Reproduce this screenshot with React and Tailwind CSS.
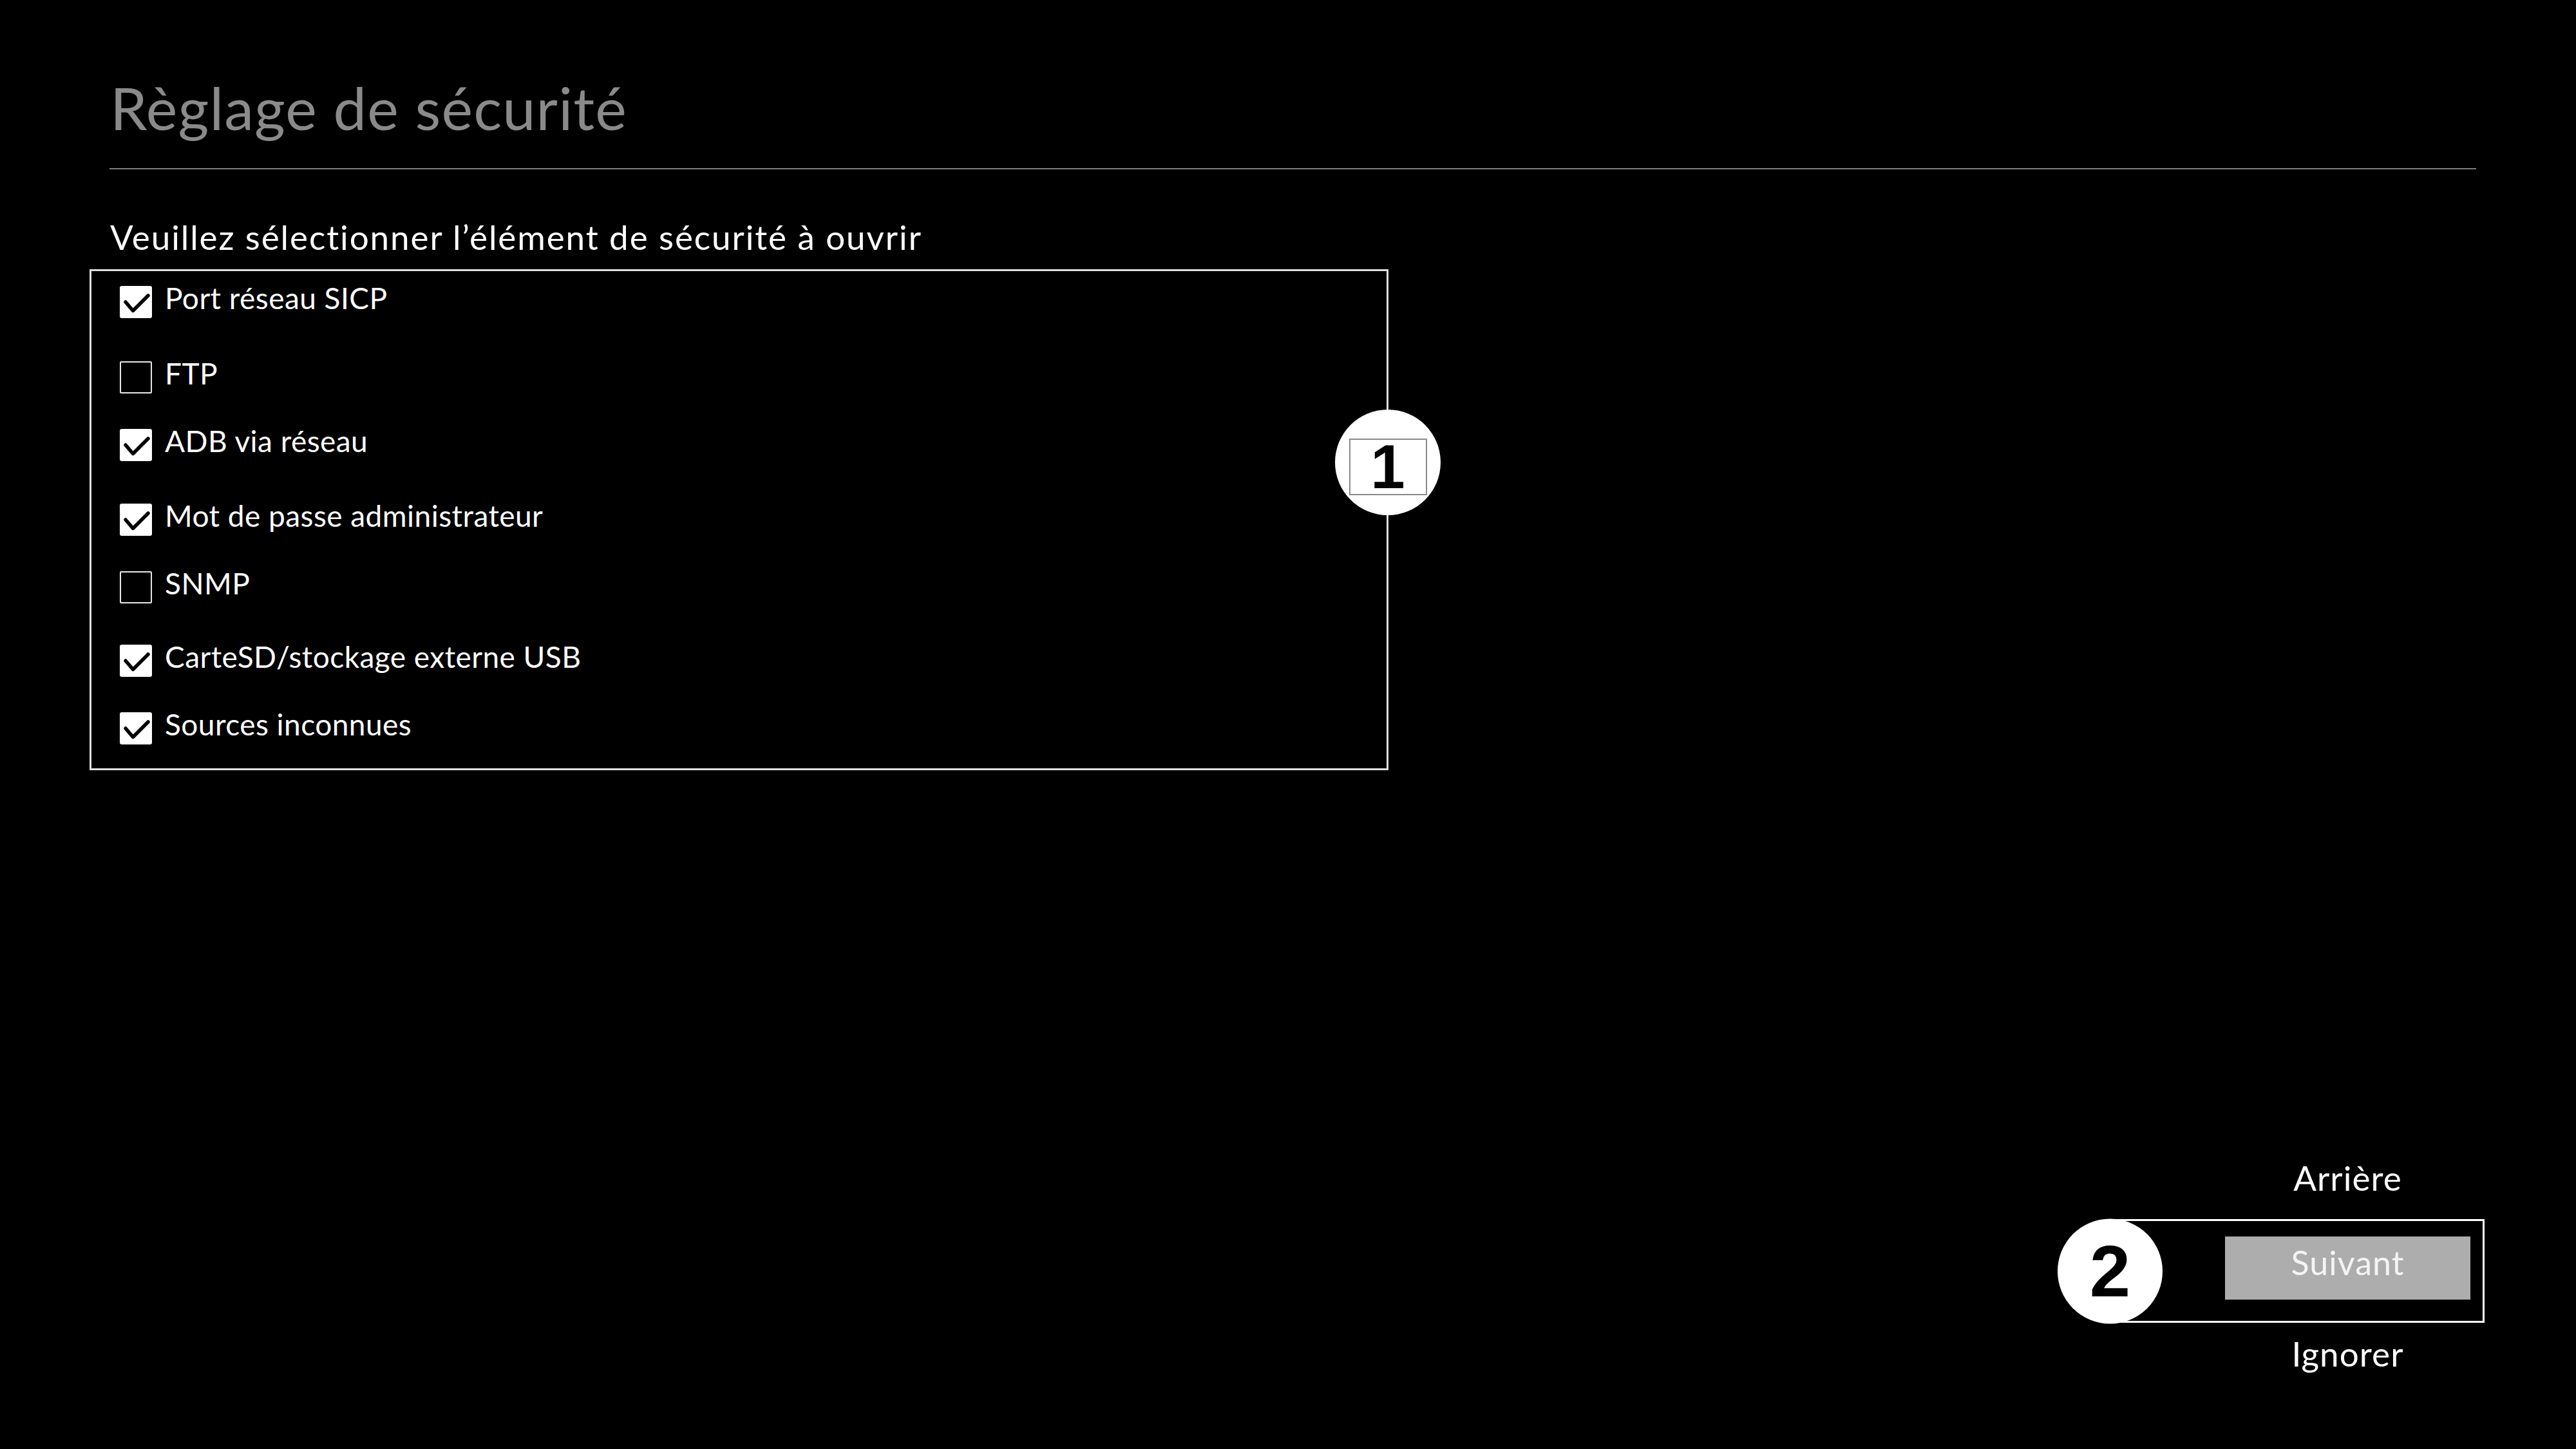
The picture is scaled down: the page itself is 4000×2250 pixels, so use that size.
import { Fragment } from "react";

const items = [
  { label: "Port réseau SICP", checked: true, row: "h-[117px]" },
  { label: "FTP", checked: false, row: "h-[105px]" },
  { label: "ADB via réseau", checked: true, row: "h-[116px]" },
  { label: "Mot de passe administrateur", checked: true, row: "h-[105px]" },
  { label: "SNMP", checked: false, row: "h-[114px]" },
  { label: "CarteSD/stockage externe USB", checked: true, row: "h-[105px]" },
  { label: "Sources inconnues", checked: true, row: "h-[105px]" },
];

function Checkbox({ checked }) {
  if (!checked) {
    return <div className="mt-[4px] h-[50px] w-[50px] shrink-0 rounded-[2px] border-2 border-[#e8e8e8]" />;
  }
  return (
    <div className="mt-[4px] h-[50px] w-[50px] shrink-0 rounded-[3px] bg-white">
      <svg viewBox="0 0 50 50" className="h-full w-full">
        <path d="M9 25 L20.5 38.5 L44 15" fill="none" stroke="#000" strokeWidth="5.5" strokeLinecap="round" strokeLinejoin="round" />
      </svg>
    </div>
  );
}

export default function App() {
  return (
    <div className="flex h-screen w-full flex-col bg-black font-['Lato',sans-serif] text-white">
      {/* header */}
      <h1 className="ml-[171px] mt-[121px] text-[92px] leading-none tracking-[0.012em] text-[#8a8a8a]">Règlage de sécurité</h1>
      <div className="ml-[170px] mr-[155px] mt-[48px] h-[2px] bg-[#7c7c7c]" />

      <p className="ml-[171px] mt-[78px] text-[53px] leading-none tracking-[0.036em]">Veuillez sélectionner l’élément de sécurité à ouvrir</p>

      {/* options box */}
      <div className="relative ml-[139px] mt-[24px] h-[778px] w-[2017px] border-[3px] border-[#dedede] pl-[44px] pt-[19px]">
        {items.map((item) => (
          <div key={item.label} className={`flex items-start gap-[20px] ${item.row}`}>
            <Checkbox checked={item.checked} />
            <span className="text-[46px] leading-none tracking-[0.01em]">{item.label}</span>
          </div>
        ))}

        <div className="absolute right-[-84px] top-[215px] flex h-[164px] w-[164px] items-center justify-center rounded-full bg-white">
          <div className="mt-[14px] flex h-[88px] w-[121px] items-center justify-center border-2 border-[#8a8a8a]">
            <span className="font-['Liberation_Sans',sans-serif] text-[96px] font-bold leading-none text-black">1</span>
          </div>
        </div>
      </div>

      {/* navigation */}
      <div className="mr-[142px] mt-[606px] w-[581px] self-end">
        <div className="flex justify-end pr-[22px]">
          <div className="w-[381px] text-center text-[53px] leading-none tracking-[0.02em]">Arrière</div>
        </div>

        <div className="relative mt-[38px] flex h-[161px] justify-end border-[3px] border-white pr-[19px] pt-[24px]">
          <div className="absolute left-[-85px] top-1/2 flex h-[163px] w-[163px] -translate-y-1/2 items-center justify-center rounded-full bg-white">
            <span className="font-['Liberation_Sans',sans-serif] text-[114px] font-bold leading-none text-black">2</span>
          </div>
          <div className="flex h-[98px] w-[381px] justify-center bg-[#adadad] pt-[14px]">
            <span className="text-[52px] leading-none tracking-[0.02em] text-[#f4f4f4]">Suivant</span>
          </div>
        </div>

        <div className="mt-[21px] flex justify-end pr-[22px]">
          <div className="w-[381px] text-center text-[53px] leading-none tracking-[0.02em]">Ignorer</div>
        </div>
      </div>
    </div>
  );
}
